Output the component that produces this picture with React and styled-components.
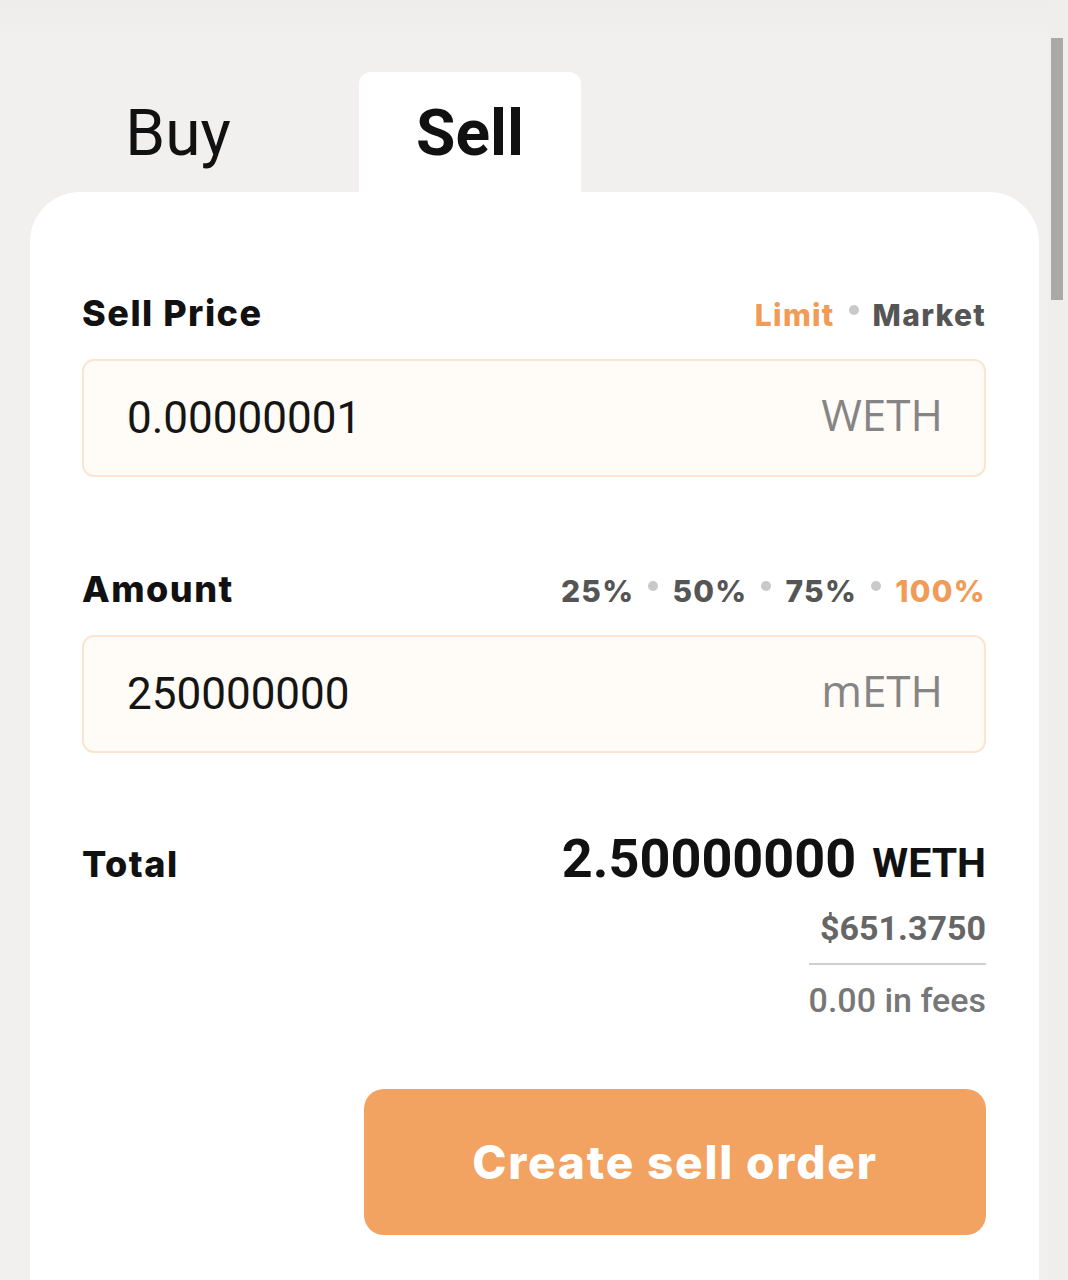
import React from 'react'
import styled, { createGlobalStyle } from 'styled-components'

const Global = createGlobalStyle`
  html, body {
    margin: 0;
    padding: 0;
    background: #f1f0ef;
  }
  * { box-sizing: border-box; }
`

const Page = styled.div`
  display: flex;
  width: 1068px;
  height: 1280px;
  overflow: hidden;
  background: linear-gradient(180deg, #efedeb 0px, #f1f0ef 40px);
`

const Main = styled.div`
  flex: 1;
  display: flex;
  flex-direction: column;
  padding-top: 72px;
`

const ScrollTrack = styled.div`
  width: 20px;
  padding: 38px 5px 0 3px;
  background: #efeeed;
`

const ScrollThumb = styled.div`
  width: 12px;
  height: 262px;
  background: #a9a9a9;
`

const Tabs = styled.div`
  display: flex;
  gap: 70px;
  padding-left: 67px;
`

const Tab = styled.div`
  width: 222px;
  height: 120px;
  display: flex;
  align-items: center;
  justify-content: center;
  padding-top: 2px;
  font-family: Roboto, "Liberation Sans", sans-serif;
  font-size: 64px;
  font-weight: ${p => (p.active ? 700 : 400)};
  color: #111;
  background: ${p => (p.active ? '#fff' : 'transparent')};
  border-radius: 12px 12px 0 0;
`

const Card = styled.div`
  margin-left: 30px;
  width: 1009px;
  flex: 1;
  background: #fff;
  border-radius: 50px 50px 0 0;
  padding: 91px 53px 0 52px;
  display: flex;
  flex-direction: column;
`

const LabelRow = styled.div`
  display: flex;
  justify-content: space-between;
  align-items: baseline;
  height: 40px;
  line-height: 40px;
  margin-top: ${p => p.top || 0}px;
  margin-bottom: 6px;
`

const Label = styled.div`
  font-family: Inter, "Liberation Sans", sans-serif;
  font-size: 36px;
  font-weight: 800;
  letter-spacing: 1.5px;
  color: #111;
`

const Options = styled.div`
  display: flex;
  align-items: center;
  gap: 12px;
  padding-top: 12px;
`

const Option = styled.span`
  font-family: Inter, "Liberation Sans", sans-serif;
  font-size: 30px;
  font-weight: 800;
  letter-spacing: 1.3px;
  color: ${p => (p.active ? '#f09b57' : '#555')};
`

const Dot = styled.span`
  width: 10px;
  height: 10px;
  border-radius: 50%;
  background: #c9c9c9;
  margin: 0 2px 10px;
`

const Field = styled.div`
  margin-top: 30px;
  height: 118px;
  border: 2px solid #fbe5d2;
  border-radius: 12px;
  background: #fffbf6;
  display: flex;
  align-items: center;
  justify-content: space-between;
  padding: 0 41px 0 43px;
`

const Value = styled.span`
  font-family: Roboto, "Liberation Sans", sans-serif;
  font-size: 44px;
  color: #151515;
`

const Unit = styled.span`
  font-family: "Open Sans", "Liberation Sans", sans-serif;
  font-size: 44px;
  color: #858585;
  margin-top: -8px;
`

const TotalRow = styled.div`
  margin-top: 76px;
  display: flex;
  justify-content: space-between;
  align-items: baseline;
  line-height: 60px;
`

const Amount = styled.div`
  font-family: Roboto, "Liberation Sans", sans-serif;
  font-weight: 700;
  color: #111;
`

const Big = styled.span`
  font-size: 54px;
`

const Small = styled.span`
  font-size: 41px;
  margin-left: 16px;
`

const FeeBlock = styled.div`
  align-self: flex-end;
  display: flex;
  flex-direction: column;
  align-items: flex-end;
`

const Usd = styled.div`
  margin-top: 6px;
  font-family: Roboto, "Liberation Sans", sans-serif;
  font-size: 34px;
  line-height: 40px;
  font-weight: 700;
  color: #666;
`

const Divider = styled.div`
  width: 100%;
  height: 2px;
  background: #cfcfcf;
  margin-top: 15px;
`

const Fees = styled.div`
  margin-top: 15px;
  font-family: Roboto, "Liberation Sans", sans-serif;
  font-size: 34px;
  line-height: 40px;
  font-weight: 500;
  color: #777;
`

const Submit = styled.button`
  align-self: flex-end;
  margin-top: 69px;
  width: 622px;
  height: 146px;
  border: none;
  border-radius: 20px;
  background: #f2a261;
  color: #fff;
  font-family: Inter, "Liberation Sans", sans-serif;
  font-size: 46px;
  font-weight: 800;
  letter-spacing: 1.8px;
  cursor: pointer;
`

const Choices = ({ items, active }) => (
  <Options>
    {items.map((item, i) => (
      <React.Fragment key={item}>
        {i > 0 && <Dot />}
        <Option active={item === active}>{item}</Option>
      </React.Fragment>
    ))}
  </Options>
)

export default function App() {
  return (
    <Page>
      <Global />
      <Main>
        <Tabs>
          <Tab>Buy</Tab>
          <Tab active>Sell</Tab>
        </Tabs>
        <Card>
          <LabelRow>
            <Label>Sell Price</Label>
            <Choices items={['Limit', 'Market']} active="Limit" />
          </LabelRow>
          <Field>
            <Value>0.00000001</Value>
            <Unit>WETH</Unit>
          </Field>

          <LabelRow top={82}>
            <Label>Amount</Label>
            <Choices items={['25%', '50%', '75%', '100%']} active="100%" />
          </LabelRow>
          <Field>
            <Value>250000000</Value>
            <Unit>mETH</Unit>
          </Field>

          <TotalRow>
            <Label>Total</Label>
            <Amount>
              <Big>2.50000000</Big>
              <Small>WETH</Small>
            </Amount>
          </TotalRow>
          <FeeBlock>
            <Usd>$651.3750</Usd>
            <Divider />
            <Fees>0.00 in fees</Fees>
          </FeeBlock>

          <Submit>Create sell order</Submit>
        </Card>
      </Main>
      <ScrollTrack>
        <ScrollThumb />
      </ScrollTrack>
    </Page>
  )
}
